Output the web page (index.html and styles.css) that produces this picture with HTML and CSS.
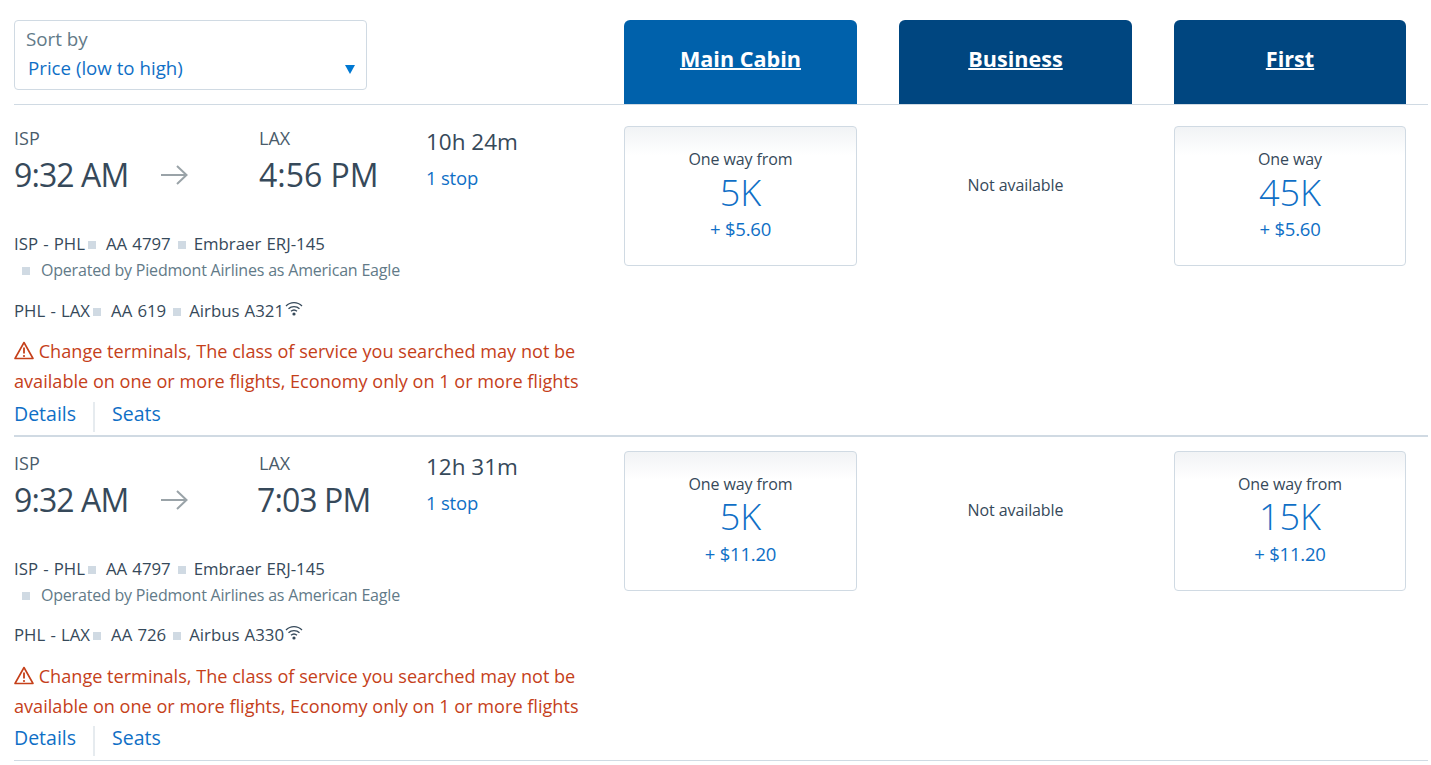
FILE: index.html
```html
<!DOCTYPE html>
<html lang="en">
<head>
<meta charset="utf-8">
<title>Flight results</title>
<link rel="stylesheet" href="styles.css">
</head>
<body>
<svg class="defs" width="0" height="0" aria-hidden="true">
  <symbol id="arrow" viewBox="0 0 28 20"><path d="M1 10H26.500M17 1l9.500 9-9.500 9" fill="none" stroke="#9aa3a8" stroke-width="2"/></symbol>
  <symbol id="warn" viewBox="0 0 20 19"><path d="M10 1.500 1 17.500H19Z" fill="none" stroke="#c5401a" stroke-width="1.600" stroke-linejoin="round"/><path d="M10 6.500V12.500" stroke="#c5401a" stroke-width="1.800"/><circle cx="10" cy="15" r="1.100" fill="#c5401a"/></symbol>
  <symbol id="wifi" viewBox="0 0 18 15"><g fill="none" stroke="#36495a" stroke-width="1.300"><path d="M1 5C5.500 .5 12.500 .5 17 5"/><path d="M3.500 7.800C6.500 4.800 11.500 4.800 14.500 7.800"/><path d="M6 10.300C7.700 8.800 10.300 8.800 12 10.300"/></g><circle cx="9" cy="13" r="1.600" fill="#36495a"/></symbol>
</svg>
<main class="page">
  <header class="head">
    <div class="sort">
      <div class="sort-label">Sort by</div>
      <div class="sort-value"><span>Price (low to high)</span><i class="caret"></i></div>
    </div>
    <a class="tab tab-main" href="#">Main Cabin</a>
    <a class="tab" href="#">Business</a>
    <a class="tab" href="#">First</a>
  </header>

  <section class="row row-one">
    <div class="info">
      <div class="times">
        <div class="point"><div class="code">ISP</div><div class="clock clock-tight">9:32 AM</div></div>
        <svg class="arrow"><use href="#arrow"/></svg>
        <div class="point point-to"><div class="code">LAX</div><div class="clock">4:56 PM</div></div>
        <div class="trip"><div class="dur">10h 24m</div><a class="stops" href="#">1 stop</a></div>
      </div>
      <div class="seg seg-first">ISP - PHL<i class="sq"></i><span>AA 4797</span><i class="sq sq2"></i><span>Embraer ERJ-145</span></div>
      <div class="oper"><i class="sq sq3"></i>Operated by Piedmont Airlines as American Eagle</div>
      <div class="seg seg-second">PHL - LAX<i class="sq"></i><span>AA 619</span><i class="sq sq2"></i><span>Airbus A321</span><svg class="wifi"><use href="#wifi"/></svg></div>
      <p class="alert"><svg class="warn"><use href="#warn"/></svg> Change terminals, The class of service you searched may not be<br>available on one or more flights, Economy only on 1 or more flights</p>
      <div class="links"><a href="#">Details</a><a class="seats" href="#">Seats</a></div>
    </div>
    <div class="fare"><div class="fare-top">One way from</div><div class="miles">5K</div><div class="tax">+ $5.60</div></div>
    <div class="none">Not available</div>
    <div class="fare"><div class="fare-top">One way</div><div class="miles">45K</div><div class="tax">+ $5.60</div></div>
  </section>

  <section class="row row-two">
    <div class="info">
      <div class="times">
        <div class="point"><div class="code">ISP</div><div class="clock clock-tight">9:32 AM</div></div>
        <svg class="arrow"><use href="#arrow"/></svg>
        <div class="point point-to"><div class="code">LAX</div><div class="clock clock-tight clock-pull">7:03 PM</div></div>
        <div class="trip"><div class="dur">12h 31m</div><a class="stops" href="#">1 stop</a></div>
      </div>
      <div class="seg seg-first">ISP - PHL<i class="sq"></i><span>AA 4797</span><i class="sq sq2"></i><span>Embraer ERJ-145</span></div>
      <div class="oper"><i class="sq sq3"></i>Operated by Piedmont Airlines as American Eagle</div>
      <div class="seg seg-second">PHL - LAX<i class="sq"></i><span>AA 726</span><i class="sq sq2"></i><span>Airbus A330</span><svg class="wifi"><use href="#wifi"/></svg></div>
      <p class="alert"><svg class="warn"><use href="#warn"/></svg> Change terminals, The class of service you searched may not be<br>available on one or more flights, Economy only on 1 or more flights</p>
      <div class="links"><a href="#">Details</a><a class="seats" href="#">Seats</a></div>
    </div>
    <div class="fare"><div class="fare-top">One way from</div><div class="miles">5K</div><div class="tax">+ $11.20</div></div>
    <div class="none">Not available</div>
    <div class="fare"><div class="fare-top">One way from</div><div class="miles">15K</div><div class="tax">+ $11.20</div></div>
  </section>
</main>
</body>
</html>
```
FILE: styles.css
```css
* { box-sizing: border-box; }
html, body { margin: 0; background: #fff; }
body { font-family: "Open Sans", sans-serif; color: #36495a; overflow: hidden; }
a { color: #0f6fc6; text-decoration: none; }
.defs { display: block; height: 0; }
.page { width: 1414px; margin-left: 14px; }

.head, .row {
  display: grid;
  grid-template-columns: 568px 233px 233px 232px;
  column-gap: 42px;
  border-bottom: 1px solid #d0dae3;
}
.head { height: 105px; padding-top: 20px; align-items: stretch; }

.sort {
  width: 353px; height: 70px;
  border: 1px solid #d0dae3; border-radius: 4px;
  padding: 5px 11px 0 11px;
  align-self: start;
}
.sort-label { font-size: 18.8px; line-height: 26px; color: #627a88; }
.sort-value { display: flex; justify-content: space-between; align-items: center; padding-left: 2px; font-size: 18.7px; line-height: 30px; color: #0f6fc6; margin-top: 1px; }
.caret { width: 0; height: 0; border-left: 5.5px solid transparent; border-right: 5.5px solid transparent; border-top: 9px solid #0078d2; margin-top: 3px; }

.tab {
  display: block; background: #004680; color: #fff;
  border-radius: 6px 6px 0 0;
  font-weight: 700; font-size: 21.6px; line-height: 28px;
  text-align: center; text-decoration: underline; padding-top: 25px;
  text-decoration-thickness: 2px;
}
.tab-main { background: #0061ab; }

.row-one { height: 332px; padding-top: 21px; border-bottom: 2px solid #d0dae3; }
.row-two { height: 324px; padding-top: 14px; }

.times { display: flex; align-items: flex-start; height: 104px; }
.point { width: 146px; }
.point-to { width: 167px; }
.code { font-size: 18px; line-height: 24px; color: #4a5c6b; }
.clock { font-size: 32px; line-height: 44px; color: #36495a; margin-top: 3px; }
.clock-tight { letter-spacing: -.9px; }
.clock-pull { margin-left: -2px; }
.arrow { width: 28px; height: 20px; margin: 39px 71px 0 0; flex: none; }
.dur { font-size: 22.5px; line-height: 32px; }
.stops { display: block; font-size: 18.5px; line-height: 28px; margin-top: 6px; letter-spacing: -.2px; }

.seg { font-size: 16.8px; word-spacing: .8px; line-height: 24px; display: flex; align-items: center; white-space: nowrap; }
.seg-first { margin-top: 2px; }
.seg-second { margin-top: 16px; }
.row-one .seg-second { margin-top: 17px; }
.sq { display: inline-block; width: 8px; height: 8px; background: #d0dae3; margin: 2px 10px 0 3px; }
.sq2 { margin-left: 7px; margin-right: 8px; }
.oper { font-size: 16px; letter-spacing: -.2px; line-height: 24px; color: #627a88; margin-top: 2px; padding-left: 8px; display: flex; align-items: center; white-space: nowrap; }
.sq3 { margin: 2px 11px 0 0; }
.wifi { width: 18px; height: 15px; margin: -6px 0 0 1px; }

.alert { margin: 14px 0 0; font-size: 18.13px; line-height: 30px; color: #c5401a; white-space: nowrap; }
.row-one .alert { margin-top: 13px; }
.warn { width: 20px; height: 19px; vertical-align: -2px; }

.links { display: flex; margin-top: 5px; font-size: 19.5px; line-height: 24px; }
.row-one .links { margin-top: 6px; }
.links a { padding: 0 17px 6px 0; }
.links .seats { border-left: 2px solid #e6ebef; padding-left: 17px; }

.fare {
  height: 140px;
  border: 1px solid #d0dae3; border-radius: 4px;
  background: linear-gradient(#f1f3f5, #fff 28px);
  text-align: center; padding-top: 20px;
}
.fare-top { font-size: 16px; letter-spacing: -.1px; line-height: 24px; }
.miles { font-size: 36px; line-height: 44px; color: #0f6fc6; font-weight: 300; }
.row-two .miles { margin: -1px 0 1px; }
.tax { font-size: 18.5px; letter-spacing: -.2px; line-height: 28px; color: #0f6fc6; }
.none { height: 118px; line-height: 118px; text-align: center; font-size: 16px; letter-spacing: -.1px; }
```
